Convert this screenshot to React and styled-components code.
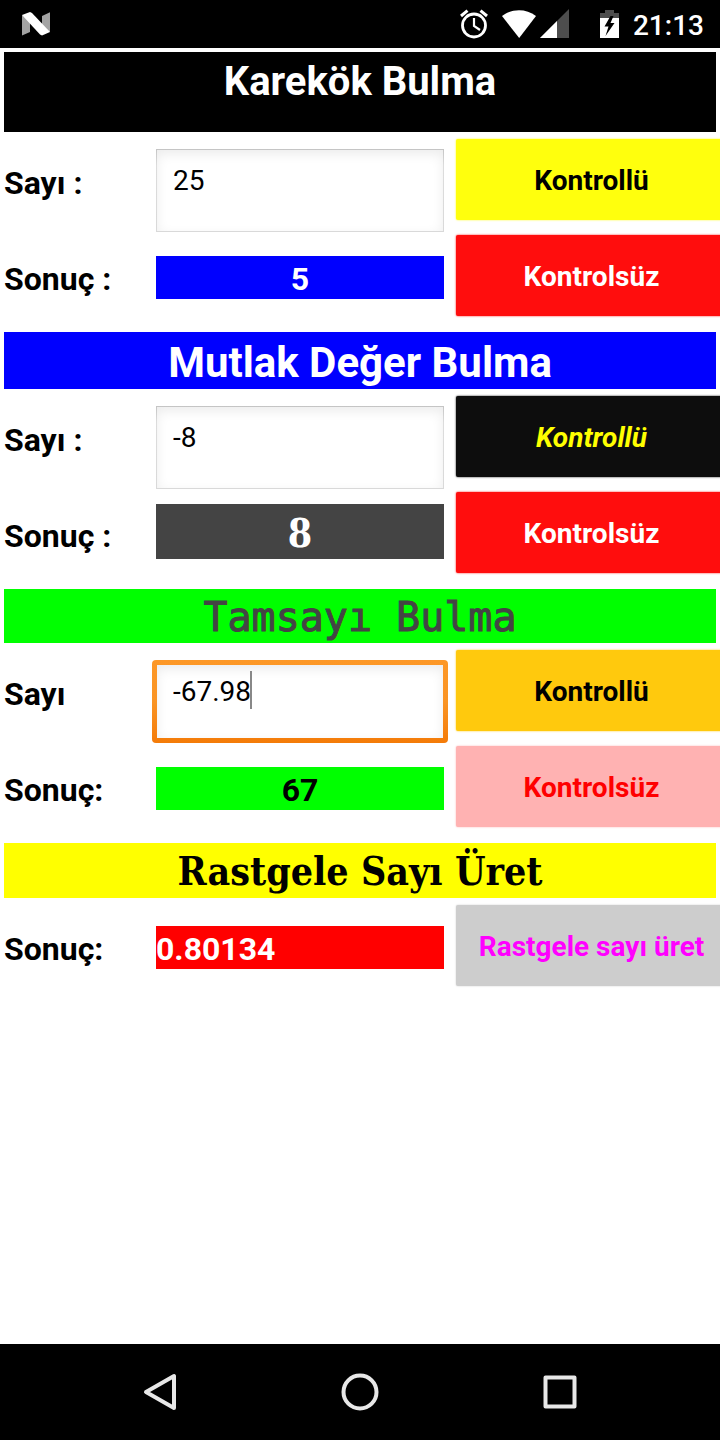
import React, { useState } from "react";
import styled, { createGlobalStyle, css } from "styled-components";

const GlobalStyle = createGlobalStyle`
  *, *::before, *::after { box-sizing: border-box; }
  body {
    margin: 0;
    background: #fff;
    color: #000;
    font-family: Roboto, "Liberation Sans", sans-serif;
  }
  button, input { font: inherit; }
`;

const Screen = styled.div`
  display: flex;
  flex-direction: column;
  min-height: 100vh;
`;

const StatusBar = styled.header`
  display: flex;
  align-items: center;
  justify-content: space-between;
  height: 48px;
  padding: 0 16px 0 20px;
  background: #000;
  color: #fff;
`;

const StatusIcons = styled.div`
  display: flex;
  align-items: center;
`;

const StatusIcon = styled.svg`
  display: block;
  width: ${(p) => p.$width}px;
  height: 32px;
  margin-right: ${(p) => p.$gap || 0}px;
`;

const Clock = styled.time`
  font-size: 28px;
  line-height: 32px;
  font-weight: 500;
  padding-top: 4px;
`;

const Main = styled.main`
  flex: 1;
  display: flex;
  flex-direction: column;
  gap: 8px;
  padding-top: 4px;
  overflow-x: hidden;
`;

const Title = styled.h2`
  margin: 0 4px;
  min-height: ${(p) => p.$height}px;
  padding-top: ${(p) => p.$top}px;
  background: ${(p) => p.$bg};
  color: ${(p) => p.$color};
  font-family: ${(p) => p.$font || "inherit"};
  font-size: ${(p) => p.$size}px;
  line-height: 48px;
  font-weight: 700;
  text-align: center;
  white-space: nowrap;
  ${(p) =>
    p.$mono &&
    css`
      font-family: "DejaVu Sans Mono", "Liberation Mono", monospace;
      font-weight: 400;
      -webkit-text-stroke: 1px ${p.$color};
    `}
`;

const Row = styled.div`
  display: grid;
  grid-template-columns: 144fr 288fr 275fr;
  column-gap: 8px;
  align-items: start;
  min-height: 96px;
  margin: 0 -7px 0 4px;
`;

const labelText = css`
  font-size: 32px;
  line-height: 38px;
  font-weight: 700;
  white-space: nowrap;
`;

const FieldLabel = styled.label`
  ${labelText}
  padding-top: 32px;
`;

const ResultLabel = styled.span`
  ${labelText}
  padding-top: 32px;
`;

const Result = styled.output`
  ${labelText}
  display: block;
  margin-top: 28px;
  padding: 4px 0 1px;
  background: ${(p) => p.$bg};
  color: ${(p) => p.$color};
  text-align: ${(p) => p.$align || "center"};
  ${(p) =>
    p.$serif &&
    css`
      margin-top: 19px;
      padding: 5px 0 2px;
      font-family: "DejaVu Serif Condensed", "DejaVu Serif", serif;
      font-size: 39px;
      line-height: 48px;
    `}
`;

const InputFrame = styled.div`
  position: relative;
  height: 83px;
  margin: 17px 0 -4px;
  padding: 1px;
  background: linear-gradient(#c4c4c4, #dcdcdc 20%, #d9d9d9);
  ${(p) =>
    p.$active &&
    css`
      margin-left: -4px;
      margin-right: -4px;
      padding: 5px;
      border-radius: 4px;
      background: linear-gradient(#fd9827, #fa9424 50%, #f47b08);
    `}
`;

const TextInput = styled.input`
  display: block;
  width: 100%;
  height: 100%;
  border: 0;
  outline: 0;
  border-radius: 0;
  padding: 0 16px 21px;
  background: #fff;
  box-shadow: inset 0 4px 12px rgba(0, 0, 0, 0.08);
  color: #000;
  font-size: 28px;
`;

const Caret = styled.span`
  position: absolute;
  top: 11px;
  left: 98px;
  width: 2px;
  height: 38px;
  background: #888;
`;

const ActionButton = styled.button`
  height: 81px;
  margin: 7px 0 0 4px;
  padding: 2px 0 0;
  border: 0;
  border-radius: 2px;
  background: ${(p) => p.$bg};
  color: ${(p) => p.$color};
  box-shadow: 0 0 2px ${(p) => p.$bg};
  font-size: 28px;
  font-weight: 700;
  font-style: ${(p) => (p.$italic ? "italic" : "normal")};
  white-space: nowrap;
  cursor: pointer;
`;

const NavBar = styled.nav`
  display: flex;
  height: 96px;
  padding: 0 60px;
  background: #000;
`;

const NavButton = styled.button`
  flex: 1;
  display: flex;
  align-items: center;
  justify-content: center;
  border: 0;
  padding: 0;
  background: transparent;
`;

const NavIcon = styled.svg`
  width: 40px;
  height: 40px;
  fill: none;
  stroke: #e8e8e8;
  stroke-width: 4;
  stroke-linejoin: round;
`;

function Section({ title, titleStyle, id, inputLabel, resultLabel, initial, active, result, resultStyle, checked, unchecked }) {
  const [value, setValue] = useState(initial);
  return (
    <section>
      <Title {...titleStyle}>{title}</Title>
      <Row>
        <FieldLabel htmlFor={id}>{inputLabel}</FieldLabel>
        <InputFrame $active={active}>
          <TextInput
            id={id}
            type="text"
            inputMode="decimal"
            value={value}
            onChange={(e) => setValue(e.target.value)}
          />
          {active && <Caret aria-hidden="true" />}
        </InputFrame>
        <ActionButton type="button" {...checked}>Kontrollü</ActionButton>
      </Row>
      <Row>
        <ResultLabel>{resultLabel}</ResultLabel>
        <Result htmlFor={id} {...resultStyle}>{result}</Result>
        <ActionButton type="button" {...unchecked}>Kontrolsüz</ActionButton>
      </Row>
    </section>
  );
}

export default function App() {
  return (
    <Screen lang="tr">
      <GlobalStyle />
      <StatusBar>
        <StatusIcon $width={32} viewBox="0 0 32 32" aria-hidden="true">
          <path fill="#a3a3a3" d="M2 7v20.500l8-3.500V12zM22 8l8-3.700V24l-8-4z" />
          <path fill="#fff" d="M2 7l8-3 2 1 18 19-8 3.500-2-1z" />
        </StatusIcon>
        <StatusIcons>
          <StatusIcon $width={28} $gap={14} viewBox="0 0 28 32" aria-hidden="true">
            <g fill="none" stroke="#fff">
              <circle cx="14" cy="17.500" r="11.500" strokeWidth="2.800" />
              <path d="M14 10v8l6 4" strokeWidth="2.200" />
              <path d="M1 8l6.500-5.300M20.500 2.700L27 8" strokeWidth="3" />
            </g>
          </StatusIcon>
          <StatusIcon $width={34} $gap={4} viewBox="0 0 34 32" aria-hidden="true">
            <path fill="#fff" d="M0 8C10 .3 24 .3 34 8L17.200 30z" />
          </StatusIcon>
          <StatusIcon $width={29} $gap={31} viewBox="0 0 29 32" aria-hidden="true">
            <path fill="#4d4d4d" d="M0 30L29 1v29z" />
            <path fill="#fff" d="M0 30l17-17v17z" />
          </StatusIcon>
          <StatusIcon $width={19} $gap={14} viewBox="0 0 19 32" aria-hidden="true">
            <path fill="#4d4d4d" d="M5 2h9v3h5v5H0V5h5z" />
            <path fill="#fff" d="M0 10h19v20H0z" />
            <path fill="#000" d="M10.500 8L4.500 18.500h4L5.500 28 14.500 15h-4L13.500 8z" />
          </StatusIcon>
          <Clock>21:13</Clock>
        </StatusIcons>
      </StatusBar>

      <Main>
        <Section
          id="karekok"
          title="Karekök Bulma"
          titleStyle={{ $bg: "#000", $color: "#fff", $size: 40, $height: 80, $top: 6 }}
          inputLabel="Sayı :"
          resultLabel="Sonuç :"
          initial="25"
          result="5"
          resultStyle={{ $bg: "#00f", $color: "#fff" }}
          checked={{ $bg: "#ffff0d", $color: "#000" }}
          unchecked={{ $bg: "#ff0d0d", $color: "#fff" }}
        />
        <Section
          id="mutlak"
          title="Mutlak Değer Bulma"
          titleStyle={{ $bg: "#00f", $color: "#fff", $size: 42, $height: 57, $top: 7 }}
          inputLabel="Sayı :"
          resultLabel="Sonuç :"
          initial="-8"
          result="8"
          resultStyle={{ $bg: "#444", $color: "#fff", $serif: true }}
          checked={{ $bg: "#0d0d0d", $color: "#ff0", $italic: true }}
          unchecked={{ $bg: "#ff0d0d", $color: "#fff" }}
        />
        <Section
          id="tamsayi"
          title="Tamsayı Bulma"
          titleStyle={{ $bg: "#0f0", $color: "#444", $size: 40, $height: 54, $top: 4, $mono: true }}
          inputLabel="Sayı"
          resultLabel="Sonuç:"
          initial="-67.98"
          active
          result="67"
          resultStyle={{ $bg: "#0f0", $color: "#000" }}
          checked={{ $bg: "#ffc90d", $color: "#000" }}
          unchecked={{ $bg: "#ffb2b2", $color: "#f00" }}
        />
        <section>
          <Title
            $bg="#ff0"
            $color="#000"
            $size={39}
            $height={55}
            $top={4}
            $font={'"DejaVu Serif Condensed", "DejaVu Serif", serif'}
          >
            Rastgele Sayı Üret
          </Title>
          <Row>
            <ResultLabel>Sonuç:</ResultLabel>
            <Result $bg="#f00" $color="#fff" $align="left">0.80134</Result>
            <ActionButton type="button" $bg="#cdcdcd" $color="#f0f">Rastgele sayı üret</ActionButton>
          </Row>
        </section>
      </Main>

      <NavBar aria-label="Sistem">
        <NavButton type="button" aria-label="Geri">
          <NavIcon viewBox="0 0 40 40"><path d="M34 4v32L6 20z" /></NavIcon>
        </NavButton>
        <NavButton type="button" aria-label="Ana ekran">
          <NavIcon viewBox="0 0 40 40"><circle cx="20" cy="20" r="16.500" /></NavIcon>
        </NavButton>
        <NavButton type="button" aria-label="Son uygulamalar">
          <NavIcon viewBox="0 0 40 40"><rect x="5.500" y="5.500" width="29" height="29" /></NavIcon>
        </NavButton>
      </NavBar>
    </Screen>
  );
}
